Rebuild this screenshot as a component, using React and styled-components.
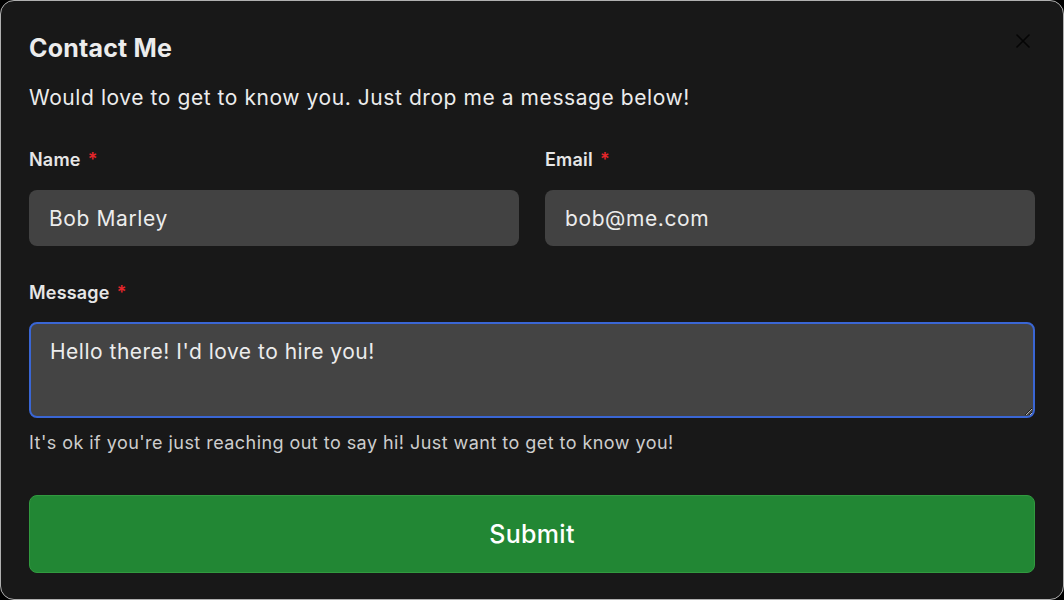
import { useEffect, useRef, useState } from "react";
import styled, { createGlobalStyle } from "styled-components";

const GlobalStyle = createGlobalStyle`
  html, body {
    margin: 0;
    padding: 0;
    background: #000;
  }
  * {
    box-sizing: border-box;
  }
`;

const Card = styled.div`
  position: relative;
  width: 1064px;
  height: 600px;
  background: #181818;
  border: 1.5px solid #b0b0b0;
  border-radius: 14px;
  padding: 32px 28px 0 28px;
  display: flex;
  flex-direction: column;
  font-family: Inter, "Noto Sans", sans-serif;
  color: #ececec;
`;

const CloseButton = styled.button`
  position: absolute;
  top: 31px;
  right: 31px;
  width: 18px;
  height: 18px;
  padding: 0;
  border: none;
  background: transparent;
  display: flex;
  align-items: center;
  justify-content: center;
  cursor: pointer;
`;

const Title = styled.h2`
  margin: 0;
  font-size: 25px;
  line-height: 30px;
  font-weight: 700;
  letter-spacing: 0.2px;
  color: #ececec;
`;

const Subtitle = styled.p`
  margin: 21px 0 0 0;
  font-size: 21px;
  line-height: 28px;
  letter-spacing: 0.57px;
  color: #ececec;
`;

const Form = styled.form`
  display: flex;
  flex-direction: column;
`;

const Row = styled.div`
  display: grid;
  grid-template-columns: 1fr 1fr;
  gap: 26px;
  margin-top: 37px;
`;

const Field = styled.div`
  display: flex;
  flex-direction: column;
  margin-top: ${(p) => p.$top || 0}px;
`;

const Label = styled.label`
  font-size: 18px;
  line-height: 22px;
  font-weight: 600;
  letter-spacing: 0.2px;
  color: #e6e6e6;
  margin-bottom: ${(p) => p.$gap || 19}px;
`;

const Required = styled.span`
  color: #e5262b;
  margin-left: 7px;
`;

const Input = styled.input`
  height: 56px;
  width: 100%;
  padding: 0 20px;
  border: none;
  border-radius: 8px;
  background: #424242;
  color: #ececec;
  font-family: inherit;
  font-size: 21px;
  letter-spacing: 0.6px;
  outline: none;
`;

const TextArea = styled.textarea`
  height: 96px;
  width: 100%;
  padding: 16px 19px;
  border: 2px solid #3a66d4;
  border-radius: 8px;
  background: #444444;
  color: #ececec;
  font-family: inherit;
  font-size: 21px;
  line-height: 24px;
  letter-spacing: 0.5px;
  outline: none;
  resize: vertical;
  color-scheme: dark;
  caret-color: #fff;
`;

const Help = styled.p`
  margin: 14px 0 0 0;
  font-size: 18px;
  line-height: 22px;
  letter-spacing: 0.45px;
  color: #cdcdcd;
`;

const SubmitButton = styled.button`
  margin-top: 41px;
  height: 78px;
  width: 100%;
  border: 1px solid #319a3f;
  border-radius: 8px;
  background: #228734;
  color: #fff;
  font-family: inherit;
  font-size: 25px;
  font-weight: 500;
  letter-spacing: 0.3px;
  cursor: pointer;
`;

const App = () => {
  const [form, setForm] = useState({
    name: "Bob Marley",
    email: "bob@me.com",
    message: "Hello there! I'd love to hire you!",
  });
  const messageRef = useRef(null);

  useEffect(() => {
    const el = messageRef.current;
    if (el) {
      el.focus();
      el.setSelectionRange(el.value.length, el.value.length);
    }
  }, []);

  const handleChange = (e) => {
    setForm({ ...form, [e.target.name]: e.target.value });
  };

  const handleSubmit = (e) => {
    e.preventDefault();
  };

  return (
    <>
      <GlobalStyle />
      <Card>
        <CloseButton aria-label="Close">
          <svg width="16" height="16" viewBox="0 0 16 16" fill="none">
            <path d="M2 2L14 14M14 2L2 14" stroke="#050505" strokeWidth="1.6" strokeLinecap="round" />
          </svg>
        </CloseButton>
        <Title>Contact Me</Title>
        <Subtitle>Would love to get to know you. Just drop me a message below!</Subtitle>
        <Form onSubmit={handleSubmit}>
          <Row>
            <Field>
              <Label htmlFor="name">
                Name<Required>*</Required>
              </Label>
              <Input id="name" name="name" value={form.name} onChange={handleChange} />
            </Field>
            <Field>
              <Label htmlFor="email">
                Email<Required>*</Required>
              </Label>
              <Input id="email" name="email" type="email" value={form.email} onChange={handleChange} />
            </Field>
          </Row>
          <Field $top={36}>
            <Label htmlFor="message" $gap={18}>
              Message<Required>*</Required>
            </Label>
            <TextArea
              ref={messageRef}
              id="message"
              name="message"
              value={form.message}
              onChange={handleChange}
            />
          </Field>
          <Help>It's ok if you're just reaching out to say hi! Just want to get to know you!</Help>
          <SubmitButton type="submit">Submit</SubmitButton>
        </Form>
      </Card>
    </>
  );
};

export default App;
